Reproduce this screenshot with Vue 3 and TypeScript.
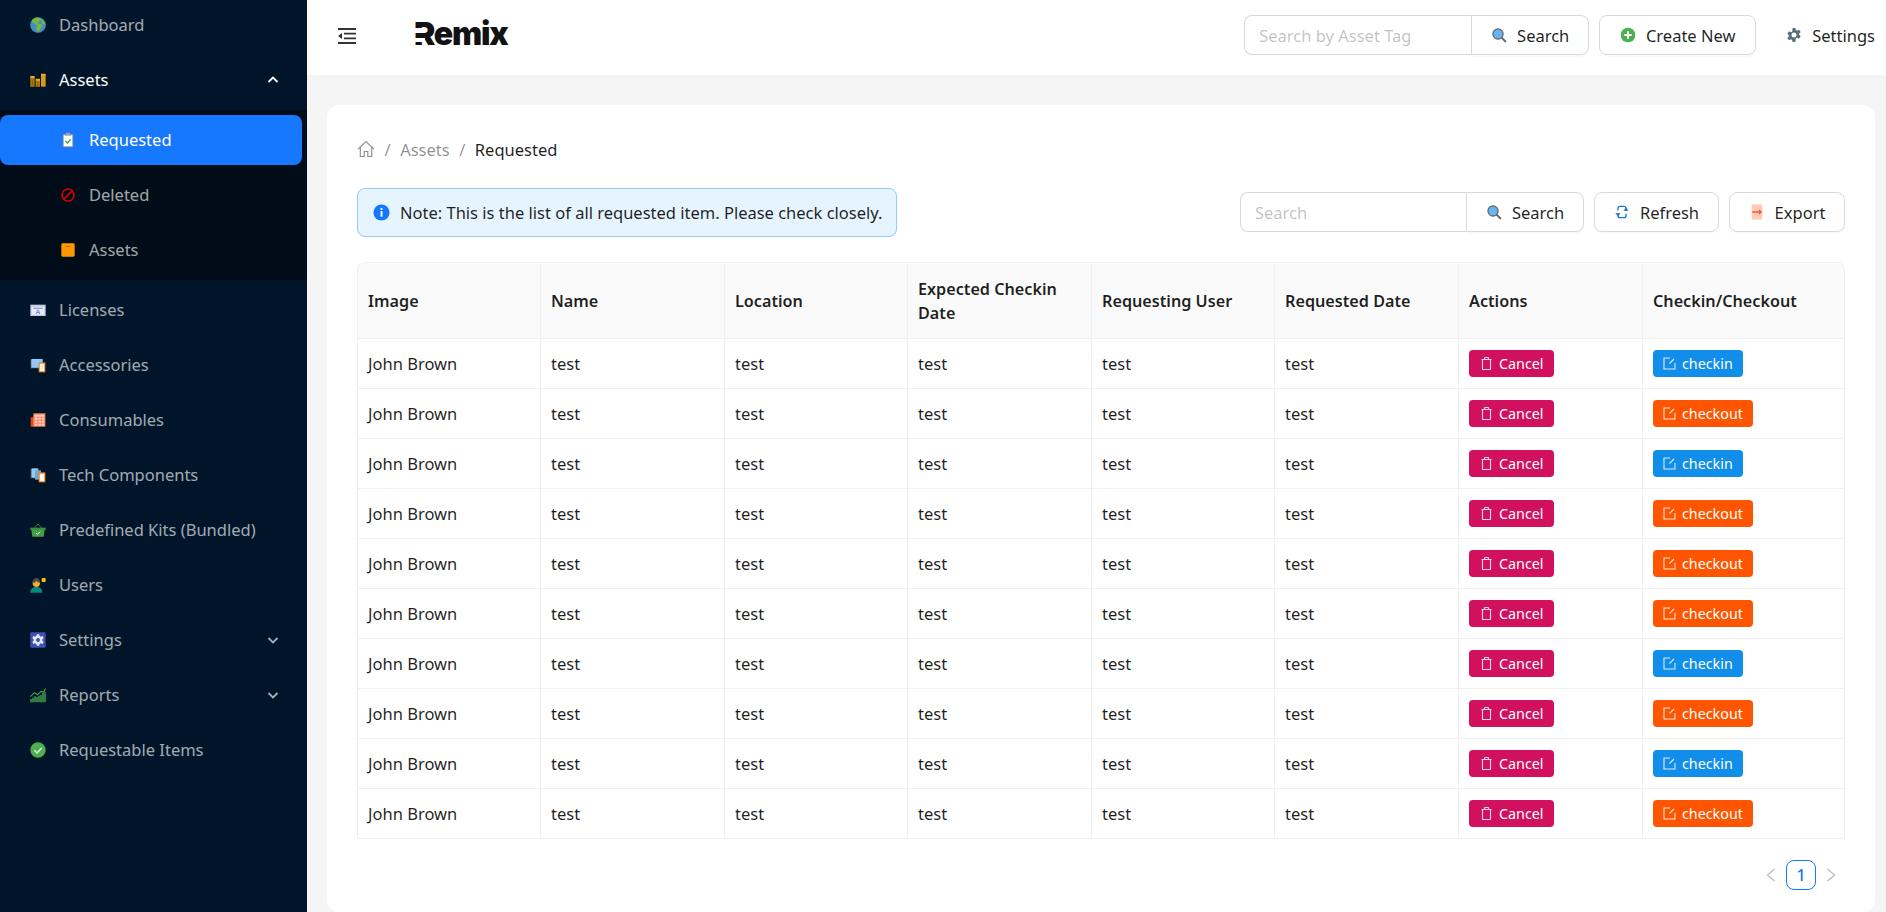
<template>
  <div class="layout">
    <aside class="sider">
      <template v-for="item in menu" :key="item.label">
        <div class="menu-item" :class="{ open: item.open }">
          <svg class="menu-icon" viewBox="0 0 48 48" v-html="icons[item.icon]"></svg>
          <span class="menu-label">{{ item.label }}</span>
          <svg v-if="item.open !== undefined" class="caret" viewBox="0 0 12 12">
            <path :d="item.open ? 'M1.5 8 6 3.5 10.5 8' : 'M1.5 4 6 8.5 10.5 4'" />
          </svg>
        </div>
        <div v-if="item.children" class="submenu">
          <div
            v-for="child in item.children"
            :key="child.label"
            class="menu-item sub-item"
            :class="{ active: child.active }"
          >
            <svg class="menu-icon" viewBox="0 0 48 48" v-html="icons[child.icon]"></svg>
            <span class="menu-label">{{ child.label }}</span>
          </div>
        </div>
      </template>
    </aside>

    <div class="main">
      <header class="topbar">
        <svg class="collapse" viewBox="0 0 18 16">
          <path d="M0 0h18v2H0zM0 14h18v2H0zM6 4.700h12v1.700H6zM6 9.600h12v1.700H6zM0 8l4-3v6z" />
        </svg>
        <div class="logo">Remix</div>
        <div class="top-actions">
          <div class="search">
            <input class="search-input tag-input" placeholder="Search by Asset Tag" />
            <button class="btn search-btn">
              <svg class="btn-icon" viewBox="0 0 48 48" v-html="icons.search"></svg>Search
            </button>
          </div>
          <button class="btn create-btn">
            <svg class="btn-icon" viewBox="0 0 48 48" v-html="icons.add"></svg>Create New
          </button>
          <div class="top-settings">
            <svg class="btn-icon" viewBox="0 0 48 48" v-html="icons.gear"></svg>Settings
          </div>
        </div>
      </header>

      <main class="content">
        <section class="card">
          <nav class="crumbs">
            <svg class="home" viewBox="0 0 18 18">
              <path d="M1 9.200 9 1.600l8 7.600M3.300 7.500v9h3.900v-5h3.600v5h3.900v-9" />
            </svg>
            <span class="sep">/</span>
            <span class="crumb-link">Assets</span>
            <span class="sep">/</span>
            <span class="crumb-now">Requested</span>
          </nav>

          <div class="toolbar">
            <div class="alert">
              <svg class="info" viewBox="0 0 18 18">
                <circle cx="9" cy="9" r="8.500" />
                <rect x="8" y="7.500" width="2" height="6" />
                <rect x="8" y="4.300" width="2" height="2" />
              </svg>
              Note: This is the list of all requested item. Please check closely.
            </div>
            <div class="tools">
              <div class="search">
                <input class="search-input list-input" placeholder="Search" />
                <button class="btn search-btn">
                  <svg class="btn-icon" viewBox="0 0 48 48" v-html="icons.search"></svg>Search
                </button>
              </div>
              <button class="btn refresh-btn">
                <svg class="btn-icon" viewBox="0 0 48 48" v-html="icons.refresh"></svg>Refresh
              </button>
              <button class="btn export-btn">
                <svg class="btn-icon" viewBox="0 0 48 48" v-html="icons.export"></svg>Export
              </button>
            </div>
          </div>

          <table class="grid">
            <colgroup>
              <col v-for="n in 7" :key="n" />
              <col />
            </colgroup>
            <thead>
              <tr>
                <th v-for="h in headers" :key="h">{{ h }}</th>
              </tr>
            </thead>
            <tbody>
              <tr v-for="(row, i) in rows" :key="i">
                <td>John Brown</td>
                <td v-for="n in 5" :key="n">test</td>
                <td>
                  <span class="tag tag-cancel">
                    <svg class="tag-icon trash" viewBox="0 0 11 13">
                      <path d="M.5 2.500h10M3.300 2.500l.5-2h3.400l.5 2M1.500 2.500v9.500c0 .3.200.5.500.5h7c.3 0 .5-.2.500-.5V2.500" />
                    </svg>Cancel
                  </span>
                </td>
                <td>
                  <span class="tag" :class="row === 'checkin' ? 'tag-in' : 'tag-out'">
                    <svg class="tag-icon" viewBox="0 0 13 13">
                      <path d="M7 1H1v11h11V6M6.500 6.500 11 2" />
                    </svg>{{ row }}
                  </span>
                </td>
              </tr>
            </tbody>
          </table>

          <div class="pager">
            <svg class="pager-arrow" viewBox="0 0 10 14"><path d="M8.500 1 1.500 7l7 6" /></svg>
            <span class="page-num">1</span>
            <svg class="pager-arrow" viewBox="0 0 10 14"><path d="M1.500 1l7 6-7 6" /></svg>
          </div>
        </section>
      </main>
    </div>
  </div>
</template>

<script setup lang="ts">
interface MenuEntry {
  label: string
  icon: string
  open?: boolean
  active?: boolean
  children?: MenuEntry[]
}

const icons: Record<string, string> = {
  globe:
    '<circle cx="24" cy="24" r="23.500" fill="#3d8fc4"/><path fill="#7cb342" d="M19 1c-4 4-10 3-13 9-3 5 3 7 8 9 5 1 5 4 6 7s-2 6-1 10 4 6 5 11c6-5 5-10 8-14s7-6 3-10-9-1-11-4 2-5 7-6 4-7-2-10zM37 8c5 3 9 9 10 15-5 1-9-1-11-5s-2-7 1-10z"/>',
  bars:
    '<path fill="#b27a0a" d="M1 16h13v28H1zM17 24h13v20H17z"/><path fill="#d99a14" d="M33 8h14v36H33z"/><path fill="#e8ac2a" d="M1 12h13v6H1zM17 20h13v6H17zM33 5h14v6H33z"/><path fill="#8f6207" d="M6 22h3v22H6zM22 30h3v14h-3z"/>',
  todo:
    '<path fill="#78909c" d="M8 6h32v40H8z"/><path fill="#fff" d="M11 9h26v34H11z"/><path fill="#90a4ae" d="M18 2h12v4h4v5H14V6h4z"/><path fill="none" stroke="#43a047" stroke-width="4" d="M16 27l6 6 10-11"/>',
  cancel:
    '<circle cx="24" cy="24" r="18" fill="none" stroke="#d50000" stroke-width="5"/><path stroke="#d50000" stroke-width="5" d="M11 37 37 11"/>',
  box:
    '<rect x="4" y="4" width="40" height="40" rx="4" fill="#ff9800"/><path fill="#8a5200" d="M17 12h14v2H17z"/>',
  license:
    '<path fill="#c5cae9" d="M1 8h46v34H1z"/><path fill="#e8eaf6" d="M5 14h38v24H5z"/><path fill="#7986cb" d="M10 17h28v3H10zM17 36l5-13h4l5 13h-3l-1-3h-6l-1 3zM22 30h4l-2-5z"/>',
  devices:
    '<path fill="#546e7a" d="M2 8h34v26H2z"/><path fill="#90caf9" d="M4 6h34v26H4z"/><path fill="#e67e22" d="M26 16h20v30H26z"/><path fill="#fff3e0" d="M29 20h14v23H29z"/>',
  sheets:
    '<path fill="#e64a19" d="M2 16h10v28H2z"/><path fill="#ff8a65" d="M10 4h36v40H10z"/><path fill="#ffccbc" d="M14 8h28v6H14zM14 17h8v6h-8zM25 17h8v6h-8zM36 17h6v6h-6zM14 26h8v6h-8zM25 26h8v6h-8zM36 26h6v6h-6zM14 35h8v6h-8zM25 35h8v6h-8zM36 35h6v6h-6z"/>',
  components:
    '<path fill="#546e7a" d="M2 6h20v28H2z"/><path fill="#90caf9" d="M5 4h20v28H5z"/><path fill="#78a8c8" d="M15 10h18v28H15z"/><path fill="#e67e22" d="M26 16h20v30H26z"/><path fill="#fff3e0" d="M29 20h14v23H29z"/>',
  basket:
    '<path fill="none" stroke="#2e7d32" stroke-width="3" d="M12 19 24 6l12 13"/><path fill="#388e3c" d="M1 17h46v7H1z"/><path fill="#43a047" d="M4 23h40l-3 21H7z"/><path fill="none" stroke="#fff" stroke-width="3" d="M18 33l4 4 8-8"/>',
  user:
    '<path fill="#00897b" d="M1 47c0-12 8-17 18-17s18 5 18 17z"/><circle cx="19" cy="19" r="11" fill="#ffa726"/><path fill="#4a4a4a" d="M7 18C7 8 12 3 19 3s12 5 12 15c-5-1-9-4-12-6-2 3-6 6-12 6z"/><rect x="35" y="3" width="12" height="12" rx="3" fill="#ffc107"/>',
  cog:
    '<rect x="1" y="1" width="46" height="46" rx="4" fill="#3f51b5"/><path fill="#e8eaf6" fill-rule="evenodd" d="M20.500 7h7l1 5 4 2 5-2 3.500 6-4 3.500v5L41 30l-3.500 6-5-2-4 2-1 5h-7l-1-5-4-2-5 2L7 30l4-3.500v-5L7 18l3.500-6 5 2 4-2zM24 18a6 6 0 1 0 0 12 6 6 0 0 0 0-12z"/>',
  chart:
    '<path fill="#4caf50" d="M1 36h4v10H1zM7 32h4v14H7zM13 28h4v18h-4zM19 30h4v16h-4zM25 26h4v20h-4zM31 24h4v22h-4zM37 18h4v28h-4zM43 16h4v30h-4z"/><path fill="none" stroke="#43a047" stroke-width="3.500" d="M1 29 13 17l10 6 10-10 8 2 6-10"/>',
  check:
    '<circle cx="24" cy="24" r="23" fill="#4caf50"/><path fill="none" stroke="#e8f5e9" stroke-width="4" d="M13 25l8 8 14-15"/>',
  search:
    '<path stroke="#616161" stroke-width="6" stroke-linecap="round" d="M31 31l12 12"/><circle cx="21" cy="21" r="17" fill="#616161"/><circle cx="21" cy="21" r="13.500" fill="#64b5f6"/>',
  add:
    '<circle cx="24" cy="24" r="22" fill="#4caf50"/><path fill="#fff" d="M21 13h6v8h8v6h-8v8h-6v-8h-8v-6h8z"/>',
  gear:
    '<path fill="#546e7a" fill-rule="evenodd" d="M20 3h8l1.500 6 4 2 5.500-3 5 7-4.500 4.500v4l4.500 4.500-5 7-5.500-3-4 2L28 45h-8l-1.500-6-4-2L9 40l-5-7 4.500-4.500v-4L4 20l5-7 5.500 3 4-2zM24 16.500a7.500 7.500 0 1 0 0 15 7.500 7.500 0 0 0 0-15z"/>',
  refresh:
    '<path fill="none" stroke="#1976d2" stroke-width="4" d="M12 19v-6c0-3 2-6 6-6h12c4 0 6 3 6 6v7M12 28v7c0 3 2 6 6 6h12c4 0 6-3 6-6v-6"/><path fill="#1976d2" d="M28 20h16l-8-9zM4 28h16l-8 9z"/>',
  export:
    '<rect x="8" y="1" width="32" height="46" fill="#ffccbc"/><path fill="#ff5722" d="M10 22h20v-6l10 8-10 8v-6H10z"/>'
}

const menu: MenuEntry[] = [
  { label: 'Dashboard', icon: 'globe' },
  {
    label: 'Assets',
    icon: 'bars',
    open: true,
    children: [
      { label: 'Requested', icon: 'todo', active: true },
      { label: 'Deleted', icon: 'cancel' },
      { label: 'Assets', icon: 'box' }
    ]
  },
  { label: 'Licenses', icon: 'license' },
  { label: 'Accessories', icon: 'devices' },
  { label: 'Consumables', icon: 'sheets' },
  { label: 'Tech Components', icon: 'components' },
  { label: 'Predefined Kits (Bundled)', icon: 'basket' },
  { label: 'Users', icon: 'user' },
  { label: 'Settings', icon: 'cog', open: false },
  { label: 'Reports', icon: 'chart', open: false },
  { label: 'Requestable Items', icon: 'check' }
]

const headers = [
  'Image',
  'Name',
  'Location',
  'Expected Checkin Date',
  'Requesting User',
  'Requested Date',
  'Actions',
  'Checkin/Checkout'
]

const rows = [
  'checkin',
  'checkout',
  'checkin',
  'checkout',
  'checkout',
  'checkout',
  'checkin',
  'checkout',
  'checkin',
  'checkout'
]
</script>

<style>
html,
body {
  height: 100%;
  overflow: hidden;
}
</style>

<style scoped>
.layout {
  display: flex;
  height: 912px;
  overflow: hidden;
  font-family: "Noto Sans", "Open Sans", sans-serif;
  font-size: 16.500px;
  color: rgba(0, 0, 0, 0.88);
}

.sider {
  flex: 0 0 307px;
  background: #001529;
  color: rgba(255, 255, 255, 0.65);
}

.menu-item {
  box-sizing: border-box;
  display: flex;
  align-items: center;
  height: 50px;
  margin: 0 5px 5px 0;
  padding: 0 23px 1px 30px;
}

.menu-item.open {
  color: #fff;
}

.submenu {
  display: flow-root;
  background: #000c17;
  padding-top: 5px;
  margin-bottom: 5px;
}

.submenu .menu-item {
  padding-left: 60px;
}

.sub-item.active {
  background: #1677ff;
  color: #fff;
  border-radius: 8px;
}

.menu-icon {
  width: 16px;
  height: 16px;
  margin-right: 13px;
  flex: none;
}

.menu-label {
  flex: 1;
}

.caret {
  width: 12px;
  height: 12px;
  fill: none;
  stroke: currentColor;
  stroke-width: 1.800;
}

.main {
  flex: 1;
  min-width: 0;
  display: flex;
  flex-direction: column;
  background: #f5f5f5;
}

.topbar {
  flex: 0 0 75px;
  box-sizing: border-box;
  display: flex;
  align-items: center;
  background: #fff;
  padding: 0 11px 5px 31px;
}

.collapse {
  width: 18px;
  height: 16px;
  fill: #333;
  margin: 2px 58px 0 0;
}

.logo {
  position: relative;
  height: 32px;
  line-height: 32px;
  margin-bottom: 2px;
  font-family: Inter, sans-serif;
  font-weight: 900;
  font-size: 32px;
  letter-spacing: -1.200px;
  color: #121212;
}

/* the logo's R has a broken stem */
.logo::before,
.logo::after {
  content: "";
  position: absolute;
  left: 0;
  width: 11px;
  background: #fff;
}

.logo::before {
  top: 10px;
  height: 5px;
}

.logo::after {
  top: 20px;
  height: 4px;
}

.top-actions {
  margin-left: auto;
  display: flex;
  align-items: center;
  gap: 10px;
}

.top-settings {
  display: flex;
  align-items: center;
  margin-left: 20px;
}

.search {
  display: flex;
}

.search-input {
  box-sizing: border-box;
  height: 40px;
  padding: 0 14px;
  border: 1px solid #d9d9d9;
  border-right: 0;
  border-radius: 8px 0 0 8px;
  font: inherit;
  outline: none;
}

.search-input::placeholder {
  color: rgba(0, 0, 0, 0.25);
}

.tag-input {
  width: 227px;
}

.list-input {
  width: 226px;
}

.btn {
  box-sizing: border-box;
  display: inline-flex;
  align-items: center;
  justify-content: center;
  height: 40px;
  background: #fff;
  border: 1px solid #d9d9d9;
  border-radius: 8px;
  box-shadow: 0 2px 0 rgba(0, 0, 0, 0.02);
  font: inherit;
  color: inherit;
}

.search-btn {
  width: 118px;
  border-radius: 0 8px 8px 0;
}

.create-btn {
  width: 157px;
}

.refresh-btn {
  width: 125px;
}

.export-btn {
  width: 116px;
}

.btn-icon {
  width: 16px;
  height: 16px;
  margin-right: 10px;
  flex: none;
}

.content {
  flex: 1;
  min-height: 0;
  padding: 30px 11px 0 20px;
}

.card {
  height: 100%;
  box-sizing: border-box;
  background: #fff;
  border-radius: 12px;
  padding: 30px 30px 0;
}

.crumbs {
  display: flex;
  align-items: center;
  height: 28px;
}

.home {
  width: 18px;
  height: 18px;
  fill: none;
  stroke: #8c8c8c;
  stroke-width: 1.100;
}

.sep {
  color: rgba(0, 0, 0, 0.45);
  margin: 0 9.500px;
}

.crumb-link {
  color: rgba(0, 0, 0, 0.45);
}

.toolbar {
  display: flex;
  align-items: flex-start;
  justify-content: space-between;
  margin-top: 25px;
  height: 74px;
}

.alert {
  box-sizing: border-box;
  display: flex;
  align-items: center;
  height: 49px;
  width: 540px;
  padding: 0 15px;
  white-space: nowrap;
  background: #e6f4ff;
  border: 1px solid #91caff;
  border-radius: 8px;
}

.info {
  width: 17px;
  height: 17px;
  margin-right: 10px;
  fill: #1677ff;
  flex: none;
}

.info rect {
  fill: #fff;
}

.tools {
  display: flex;
  gap: 10px;
  margin-top: 4px;
}

.grid {
  width: 1488px;
  table-layout: fixed;
  border-collapse: separate;
  border-spacing: 0;
  border-top: 1px solid #f0f0f0;
  border-left: 1px solid #f0f0f0;
  border-radius: 8px 8px 0 0;
}

.grid col {
  width: 183px;
}

.grid col:nth-child(even),
.grid col:nth-child(7) {
  width: 184px;
}

.grid col:last-child {
  width: auto;
}

.grid th,
.grid td {
  box-sizing: border-box;
  padding: 0 10px;
  border-right: 1px solid #f0f0f0;
  border-bottom: 1px solid #f0f0f0;
  text-align: left;
}

.grid th {
  height: 76px;
  background: #fafafa;
  font-size: 16.200px;
  font-weight: 600;
  line-height: 24px;
}

.grid th:first-child {
  border-top-left-radius: 8px;
}

.grid th:last-child {
  border-top-right-radius: 8px;
}

.grid td {
  height: 50px;
}

.tag {
  display: inline-flex;
  align-items: center;
  height: 27px;
  padding: 0 10px;
  border-radius: 4px;
  color: #fff;
  font-size: 14.300px;
}

.tag-icon {
  width: 13px;
  height: 13px;
  margin-right: 6px;
  fill: none;
  stroke: rgba(255, 255, 255, 0.85);
  stroke-width: 1.100;
}

.tag-icon.trash {
  width: 11px;
  margin-left: 2px;
  margin-right: 7px;
}

.tag-cancel {
  background: #d1105e;
}

.tag-in {
  background: #108ee9;
}

.tag-out {
  background: #f50;
}

.pager {
  display: flex;
  align-items: center;
  justify-content: flex-end;
  gap: 10px;
  margin-top: 21px;
  padding-right: 9px;
}

.pager-arrow {
  width: 10px;
  height: 14px;
  fill: none;
  stroke: #bdbdbd;
  stroke-width: 1.300;
}

.page-num {
  box-sizing: border-box;
  width: 30px;
  height: 30px;
  line-height: 28px;
  text-align: center;
  border: 1px solid #1677ff;
  border-radius: 8px;
  color: #1677ff;
  font-weight: 500;
  font-size: 16px;
}
</style>
